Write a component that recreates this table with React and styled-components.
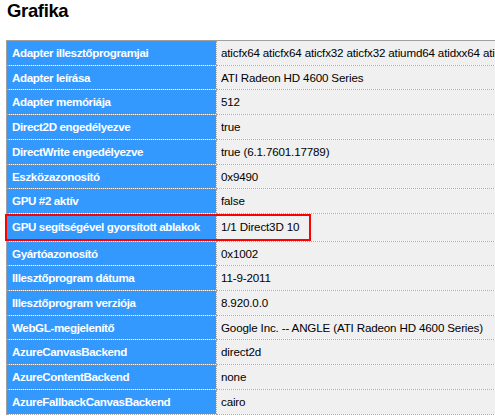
import React from "react";
import styled, { createGlobalStyle } from "styled-components";

const Global = createGlobalStyle`
  html, body {
    margin: 0;
    padding: 0;
    background: #ffffff;
    overflow: hidden;
  }
  body {
    font-family: "Liberation Sans", Arial, sans-serif;
  }
`;

const Page = styled.div`
  padding: 0 0 0 6px;
`;

const Heading = styled.h2`
  margin: 0;
  padding: 1px 0 0 1px;
  height: 40px;
  line-height: 20px;
  box-sizing: border-box;
  font-size: 18.5px;
  font-weight: bold;
  letter-spacing: -0.35px;
  color: #000;
`;

const Table = styled.table`
  border-collapse: collapse;
  table-layout: fixed;
  width: 620px;
  border-top: 1px solid #a0a0a0;
  border-left: 1px solid #a0a0a0;
`;

const Cell = styled.td`
  padding: ${(p) => (p.$tall ? "5px 5px 6px" : "4px 5px")};
  line-height: 15.7px;
  font-size: 11.6px;
  white-space: nowrap;
  overflow: hidden;
  border-bottom: 1px dotted #a8a8a8;
  vertical-align: middle;
`;

const Label = styled(Cell)`
  width: 199px;
  background: #3399ff;
  color: #ffffff;
  font-weight: bold;
  letter-spacing: -0.38px;
  position: relative;
  overflow: visible;
`;

const Value = styled(Cell)`
  background: #f0f0f0;
  color: #000000;
  letter-spacing: -0.15px;
  border-left: 1px dotted #a8a8a8;
  padding-left: 4px;
`;

const Highlight = styled.span`
  position: absolute;
  left: -2px;
  top: 0px;
  width: 302px;
  height: 23px;
  border: 2px solid #ff0000;
  pointer-events: none;
`;

const rows = [
  ["Adapter illesztőprogramjai", "aticfx64 aticfx64 aticfx32 aticfx32 atiumd64 atidxx64 atiumdag atidxx32 atiumdva atiumd6a atitmm64"],
  ["Adapter leírása", "ATI Radeon HD 4600 Series"],
  ["Adapter memóriája", "512"],
  ["Direct2D engedélyezve", "true"],
  ["DirectWrite engedélyezve", "true (6.1.7601.17789)"],
  ["Eszközazonosító", "0x9490"],
  ["GPU #2 aktív", "false"],
  ["GPU segítségével gyorsított ablakok", "1/1 Direct3D 10", true],
  ["Gyártóazonosító", "0x1002"],
  ["Illesztőprogram dátuma", "11-9-2011"],
  ["Illesztőprogram verziója", "8.920.0.0"],
  ["WebGL-megjelenítő", "Google Inc. -- ANGLE (ATI Radeon HD 4600 Series)"],
  ["AzureCanvasBackend", "direct2d"],
  ["AzureContentBackend", "none"],
  ["AzureFallbackCanvasBackend", "cairo"],
];

export default function App() {
  return (
    <>
      <Global />
      <Page>
        <Heading>Grafika</Heading>
        <Table>
          <tbody>
            {rows.map(([k, v, hl]) => (
              <tr key={k}>
                <Label $tall={hl}>
                  {hl && <Highlight />}
                  {k}
                </Label>
                <Value $tall={hl}>{v}</Value>
              </tr>
            ))}
          </tbody>
        </Table>
      </Page>
    </>
  );
}
